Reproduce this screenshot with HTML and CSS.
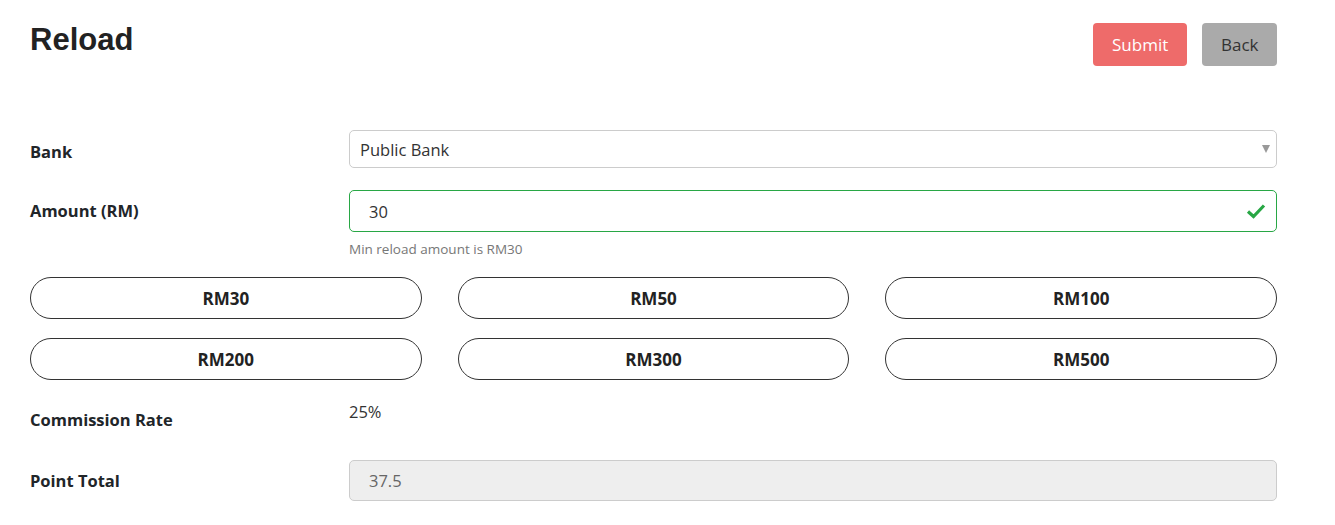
FILE: index.html
```html
<!DOCTYPE html>
<html lang="en">
<head>
    <meta charset="UTF-8">
    <meta name="viewport" content="width=device-width, initial-scale=1.0">
    <title>Reload</title>
    <link rel="stylesheet" href="styles.css">
</head>
<body>
    <div class="container">
        <div class="page-header">
            <h1>Reload</h1>
            <div class="actions">
                <button type="submit" form="reload-form" class="btn btn-submit">Submit</button>
                <button type="button" class="btn btn-back">Back</button>
            </div>
        </div>

        <form id="reload-form" class="reload-form">
            <div class="form-row">
                <label for="bank">Bank</label>
                <div class="select-wrap">
                    <select id="bank" name="bank">
                        <option>Public Bank</option>
                        <option>Maybank</option>
                        <option>CIMB Bank</option>
                    </select>
                    <span class="caret"></span>
                </div>
            </div>

            <div class="form-row row-amount">
                <label for="amount">Amount (RM)</label>
                <div>
                    <div class="input-wrap">
                        <input type="text" id="amount" name="amount" class="is-valid" value="30">
                        <svg class="valid-icon" width="20" height="16" viewBox="0 0 20 16">
                            <path d="M2 8.5 L7.5 13.5 L18 2.5" fill="none" stroke="#28a745" stroke-width="3.2"/>
                        </svg>
                    </div>
                    <small class="help-text">Min reload amount is RM30</small>
                </div>
            </div>

            <div class="amount-options">
                <button type="button" class="amount-btn">RM30</button>
                <button type="button" class="amount-btn">RM50</button>
                <button type="button" class="amount-btn">RM100</button>
                <button type="button" class="amount-btn">RM200</button>
                <button type="button" class="amount-btn">RM300</button>
                <button type="button" class="amount-btn">RM500</button>
            </div>

            <div class="form-row row-commission">
                <label>Commission Rate</label>
                <div class="static-value">25%</div>
            </div>

            <div class="form-row row-points">
                <label for="points">Point Total</label>
                <input type="text" id="points" name="points" value="37.5" readonly>
            </div>
        </form>
    </div>
</body>
</html>
```

FILE: styles.css
```css
body {
    font-family: "Open Sans", "Noto Sans", sans-serif;
    color: #212529;
    background-color: #fff;
    margin: 0;
    padding: 0;
}

.container {
    width: 1247px;
    padding: 20px 0 0 30px;
}

.page-header {
    display: flex;
    justify-content: space-between;
    align-items: flex-start;
}

h1 {
    font-family: "Liberation Sans", Arial, sans-serif;
    font-size: 31px;
    font-weight: bold;
    line-height: 38px;
    color: #222;
    margin: 1px 0 0;
}

.actions {
    display: flex;
    gap: 15px;
    margin-top: 3px;
}

.btn {
    font-family: inherit;
    font-size: 17px;
    height: 43px;
    padding: 0 19px;
    border: none;
    border-radius: 4px;
    cursor: pointer;
}

.btn-submit {
    background-color: #ee6b6a;
    color: #fff;
    width: 94px;
}

.btn-back {
    background-color: #aaa;
    color: #333;
    width: 75px;
}

.reload-form {
    margin-top: 64px;
}

.form-row {
    display: grid;
    grid-template-columns: 319px 1fr;
    align-items: center;
}

.form-row label {
    font-weight: bold;
    font-size: 16.5px;
    padding-top: 4px;
}

.select-wrap,
.input-wrap {
    position: relative;
}

select,
input[type="text"] {
    width: 100%;
    box-sizing: border-box;
    font-family: inherit;
    font-size: 16.5px;
    color: #333;
    background-color: #fff;
    border: 1px solid #ccc;
    border-radius: 5px;
    outline: none;
}

select {
    height: 38px;
    padding: 0 10px;
    appearance: none;
}

.caret {
    position: absolute;
    right: 7px;
    top: 15px;
    border-left: 4px solid transparent;
    border-right: 4px solid transparent;
    border-top: 8px solid #999;
}

.row-amount {
    margin-top: 22px;
    align-items: start;
}

.row-amount label {
    padding-top: 9px;
}

input[type="text"] {
    height: 42px;
    padding: 0 19px;
}

input.is-valid {
    border-color: #28a745;
}

.valid-icon {
    position: absolute;
    right: 11px;
    top: 13px;
}

.help-text {
    display: block;
    font-size: 13.5px;
    color: #777;
    margin-top: 8px;
    line-height: 18px;
}

.amount-options {
    display: grid;
    grid-template-columns: repeat(3, 1fr);
    column-gap: 36px;
    row-gap: 19px;
    margin-top: 19px;
}

.amount-btn {
    height: 42px;
    font-family: inherit;
    font-size: 17px;
    font-weight: bold;
    color: #222;
    background-color: #fff;
    border: 1px solid #333;
    border-radius: 21px;
    cursor: pointer;
}

.row-commission {
    margin-top: 20px;
    align-items: start;
}

.row-commission label {
    padding-top: 8px;
}

.static-value {
    font-size: 16.5px;
    line-height: 24px;
    color: #333;
}

.row-points {
    margin-top: 29px;
}

.row-points label {
    padding-top: 0;
}

#points {
    height: 41px;
    background-color: #eee;
    color: #666;
}
```
